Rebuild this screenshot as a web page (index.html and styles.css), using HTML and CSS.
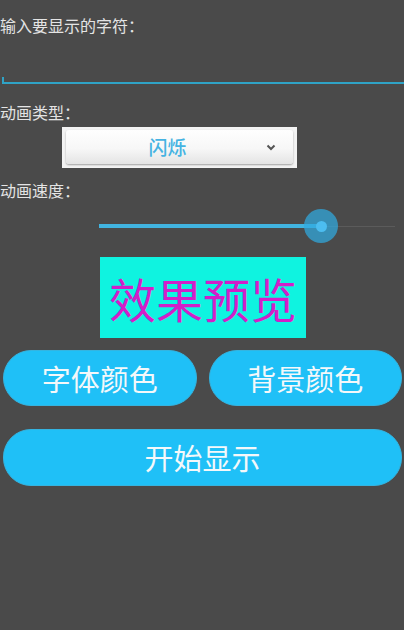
FILE: index.html
```html
<!DOCTYPE html>
<html lang="zh-CN">
<head>
<meta charset="utf-8">
<title>显示设置</title>
<link rel="stylesheet" href="styles.css">
</head>
<body>
<main class="screen">
  <div class="label label-first">输入要显示的字符：</div>
  <div class="edit"><span class="edit-tick"></span></div>

  <div class="label label-type">动画类型：</div>
  <div class="spinner">
    <div class="spinner-inner">
      <span class="spinner-text">闪烁</span>
      <svg class="chevron" width="10" height="7" viewBox="0 0 10 7"><path d="M1.5 1.5 L5 5 L8.5 1.5" fill="none" stroke="#555" stroke-width="2"/></svg>
    </div>
  </div>

  <div class="label label-speed">动画速度：</div>
  <div class="slider">
    <div class="track">
      <div class="track-fill"></div>
      <div class="track-rest"></div>
      <div class="thumb"><div class="thumb-dot"></div></div>
    </div>
  </div>

  <div class="preview-wrap">
    <div class="preview">效果预览</div>
  </div>

  <div class="btn-row">
    <button class="btn">字体颜色</button>
    <button class="btn">背景颜色</button>
  </div>
  <button class="btn btn-wide">开始显示</button>
</main>
</body>
</html>
```

FILE: styles.css
```css
html, body {
  margin: 0;
  padding: 0;
  background: #4a4a4a;
  height: 100%;
}
body {
  font-family: "Noto Sans CJK SC", "Noto Sans", sans-serif;
  color: #e6e6e6;
}
.screen {
  display: flex;
  flex-direction: column;
  width: 404px;
}
.label {
  font-size: 16px;
  line-height: 20px;
  height: 20px;
  color: #e4e4e4;
  margin-left: 0;
}
.label-first { margin-top: 15px; }
.edit {
  position: relative;
  height: 47px;
  margin-left: 2px;
  border-bottom: 2px solid #2fa3c6;
}
.edit-tick {
  position: absolute;
  left: 0;
  bottom: 0;
  width: 2px;
  height: 5px;
  background: #2fa3c6;
}
.label-type { margin-top: 18px; }
.spinner {
  margin-top: 5px;
  margin-left: 62px;
  width: 235px;
  height: 41px;
  box-sizing: border-box;
  background: #f3f3f3;
  padding: 3px 4px 4px 4px;
}
.spinner-inner {
  position: relative;
  height: 100%;
  border-radius: 3px;
  background: linear-gradient(#fefefe 0%, #f7f7f7 55%, #e4e4e4 100%);
  box-shadow: 0 1px 2px rgba(0,0,0,0.35);
  display: flex;
  align-items: center;
  justify-content: center;
  padding-right: 24px;
  box-sizing: border-box;
}
.spinner-text {
  font-size: 19px;
  color: #45b3e2;
  line-height: 22px;
  font-weight: 500;
}
.chevron {
  position: absolute;
  right: 17px;
  top: 14px;
}
.label-speed { margin-top: 12px; }
.slider {
  margin-top: 6px;
  height: 40px;
  display: flex;
  align-items: center;
  padding-left: 99px;
  padding-right: 9px;
}
.track {
  position: relative;
  flex: 1;
  height: 4px;
  display: flex;
  align-items: center;
}
.track-fill {
  width: 222px;
  height: 4px;
  background: #41b4e0;
}
.track-rest {
  flex: 1;
  height: 1px;
  background: #5b5b5b;
}
.thumb {
  position: absolute;
  left: 205px;
  top: -15px;
  width: 34px;
  height: 34px;
  border-radius: 50%;
  background: rgba(48, 170, 225, 0.72);
  display: flex;
  align-items: center;
  justify-content: center;
}
.thumb-dot {
  width: 11px;
  height: 11px;
  border-radius: 50%;
  background: #4cbdf0;
}
.preview-wrap {
  margin-top: 11px;
  padding-left: 100px;
}
.preview {
  width: 206px;
  height: 81px;
  background: #0ff3e0;
  color: #d21fc9;
  font-size: 47px;
  line-height: 81px;
  text-align: center;
}
.btn-row {
  display: flex;
  gap: 12px;
  margin-top: 12px;
  padding: 0 2px 0 3px;
}
.btn {
  font-family: "Noto Sans CJK SC", "Noto Sans", sans-serif;
  flex: 1;
  height: 56px;
  border: 1px solid #35b4e0;
  border-radius: 28px;
  background: #1fc0f7;
  color: #f4f8fa;
  font-size: 29px;
  line-height: 1;
  padding: 0;
  cursor: pointer;
}
.btn-wide {
  margin: 23px 2px 0 3px;
  height: 57px;
  flex: none;
}
```
